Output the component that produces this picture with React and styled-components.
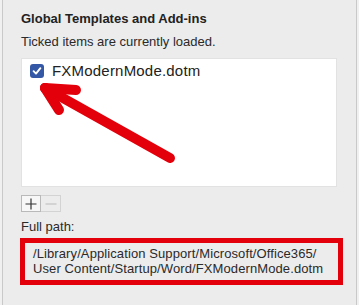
import React from 'react'
import styled, { createGlobalStyle } from 'styled-components'

const GlobalStyle = createGlobalStyle`
  html, body {
    margin: 0;
    padding: 0;
    background: #f0f0f0;
  }
  body {
    font-family: "Liberation Sans", Arial, Helvetica, sans-serif;
    color: #242424;
  }
`

const Page = styled.div`
  position: relative;
  width: 359px;
  height: 305px;
  overflow: hidden;
  background: #f0f0f0;
`

const Panel = styled.div`
  box-sizing: border-box;
  height: 305px;
  margin: 0 2px;
  padding: 11px 0 0 18px;
  background: #ececec;
  border-left: 1px solid #c9c9c9;
  border-right: 1px solid #c9c9c9;
  display: flex;
  flex-direction: column;
`

const Heading = styled.div`
  font-size: 13px;
  font-weight: 700;
  line-height: 16px;
  color: #222;
`

const Note = styled.div`
  margin-top: 7px;
  font-size: 13px;
  line-height: 16px;
  color: #2a2a2a;
`

const ListBox = styled.div`
  box-sizing: border-box;
  margin-top: 8px;
  width: 316px;
  height: 129px;
  background: #fff;
  border: 1px solid #e2e2e2;
  padding: 4px 0 0 8px;
`

const Row = styled.label`
  display: flex;
  align-items: center;
  gap: 8px;
  font-size: 15px;
  line-height: 15px;
  letter-spacing: 0.2px;
  color: #222;
`

const Check = styled.span`
  width: 14px;
  height: 14px;
  border-radius: 3px;
  background: #3458a6;
  display: flex;
  align-items: center;
  justify-content: center;
`

const Buttons = styled.div`
  display: flex;
  margin-top: 8px;
`

const SquareButton = styled.button`
  box-sizing: border-box;
  width: 20px;
  height: 17px;
  padding: 0;
  margin: 0;
  display: flex;
  align-items: center;
  justify-content: center;
  background: ${p => (p.disabled ? '#ececec' : '#f7f7f7')};
  border: 1px solid ${p => (p.disabled ? '#d3d3d3' : '#b9b9b9')};
  border-left-width: ${p => (p.disabled ? '0' : '1px')};
`

const Label = styled.div`
  margin-top: 7px;
  font-size: 13px;
  line-height: 16px;
  color: #2a2a2a;
`

const PathBox = styled.div`
  box-sizing: border-box;
  margin-top: 3px;
  margin-left: -1px;
  width: 323px;
  height: 47px;
  border: 5px solid #e4000b;
  padding: 3px 0 0 8px;
  font-size: 13px;
  line-height: 15px;
  letter-spacing: 0.1px;
  color: #2a2a2a;
`

const Overlay = styled.svg`
  position: absolute;
  left: 0;
  top: 0;
  pointer-events: none;
`

const App = () => {
  return (
    <Page>
      <GlobalStyle />
      <Panel>
        <Heading>Global Templates and Add-ins</Heading>
        <Note>Ticked items are currently loaded.</Note>
        <ListBox>
          <Row>
            <Check>
              <svg width='10' height='10' viewBox='0 0 10 10'>
                <path d='M1.6 5.2 L4 7.6 L8.4 2.2' fill='none' stroke='#fff' strokeWidth='1.9' strokeLinecap='round' strokeLinejoin='round' />
              </svg>
            </Check>
            FXModernMode.dotm
          </Row>
        </ListBox>
        <Buttons>
          <SquareButton>
            <svg width='12' height='12' viewBox='0 0 12 12'>
              <path d='M6 0.5 V11.5 M0.5 6 H11.5' stroke='#333' strokeWidth='1.2' />
            </svg>
          </SquareButton>
          <SquareButton disabled>
            <svg width='12' height='12' viewBox='0 0 12 12'>
              <path d='M0.5 6 H11.5' stroke='#c4c4c4' strokeWidth='1.2' />
            </svg>
          </SquareButton>
        </Buttons>
        <Label>Full path:</Label>
        <PathBox>
          /Library/Application Support/Microsoft/Office365/
          <br />
          User Content/Startup/Word/FXModernMode.dotm
        </PathBox>
      </Panel>
      <Overlay width='359' height='305' viewBox='0 0 359 305'>
        <g stroke='#e4000b' strokeWidth='10' strokeLinecap='round' strokeLinejoin='round' fill='none'>
          <path d='M45 88 L170 158' />
          <path d='M45 88 L76 90' />
          <path d='M45 88 L59 110' />
        </g>
      </Overlay>
    </Page>
  )
}

export default App
